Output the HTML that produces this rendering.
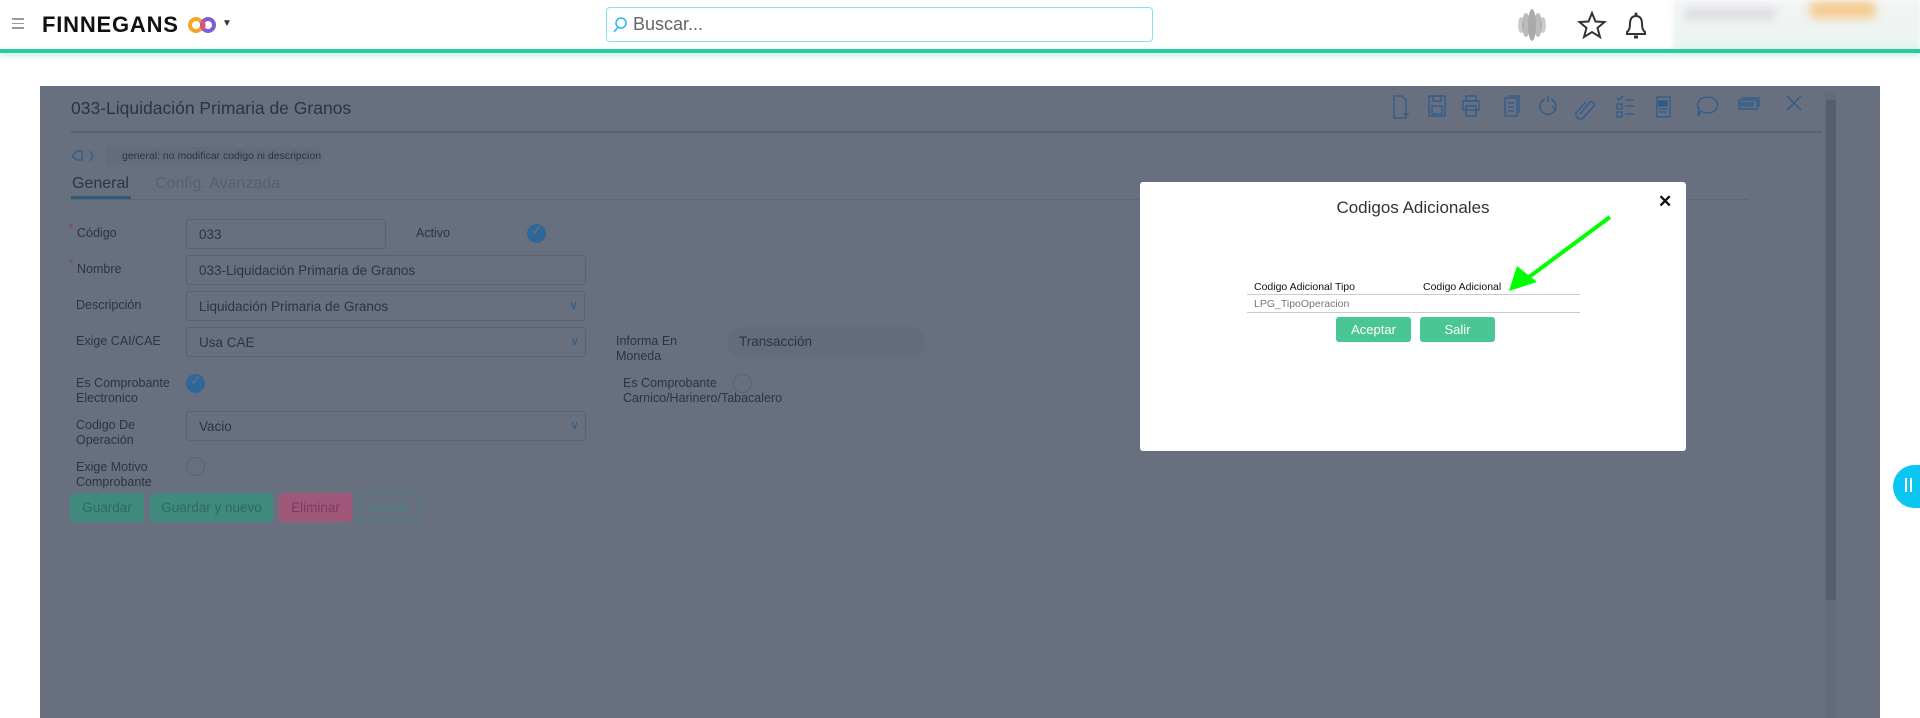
<!DOCTYPE html>
<html><head><meta charset="utf-8"><style>
*{box-sizing:border-box;margin:0;padding:0}
body{width:1920px;height:718px;overflow:hidden;background:#fff;font-family:"Liberation Sans",sans-serif;position:relative}
.abs{position:absolute}
.hdr{left:0;top:0;width:1920px;height:50px;background:#fff}
.gl{left:0;top:49px;width:1920px;height:4px;background:#2fc79c;box-shadow:0 2px 6px rgba(47,199,156,.4)}
.panel{left:40px;top:86px;width:1840px;height:632px;background:#687080}
.txt{color:#2c3440;font-size:13px}
.inp{border:1px solid #5a6372;border-radius:3px;height:30px;background:#687080;color:#2c3440;font-size:13.5px;padding:7px 12px}
.lbl{color:#2c3440;font-size:12.5px;line-height:15px}
.chev{position:absolute;right:6px;top:6px;color:#2d5a8a;font-size:12px}
.btn{height:29px;border-radius:3px;font-size:13.5px;text-align:center;line-height:29px}
.chk{width:19px;height:19px;border-radius:50%}
</style></head><body>
<div class="abs hdr"></div>
<div class="abs" style="left:12px;top:18px;width:12px;">
<div style="height:1.5px;background:#999;margin-bottom:3px"></div><div style="height:1.5px;background:#999;margin-bottom:3px"></div><div style="height:1.5px;background:#999"></div></div>
<div class="abs" style="left:42px;top:12px;font-size:22px;font-weight:bold;color:#111;letter-spacing:0.8px">FINNEGANS</div>
<svg class="abs" style="left:188px;top:16px" width="30" height="18"><circle cx="8" cy="9" r="6" fill="none" stroke="#f5a623" stroke-width="4"/><circle cx="20" cy="9" r="6" fill="none" stroke="#7b5fd6" stroke-width="4"/><path d="M14 5 a6 6 0 0 1 0 8" stroke="#e94e77" stroke-width="4" fill="none"/></svg>
<div class="abs" style="left:222px;top:18px;font-size:10px;color:#333">▼</div>
<div class="abs" style="left:606px;top:7px;width:547px;height:35px;border:1px solid #86e2f3;border-radius:4px"></div>
<svg class="abs" style="left:612px;top:16px" width="16" height="18"><circle cx="9" cy="7" r="5" fill="none" stroke="#29b6f6" stroke-width="1.5"/><path d="M6 11 L2 16" stroke="#29b6f6" stroke-width="1.5"/></svg>
<div class="abs" style="left:633px;top:14px;font-size:18px;color:#666">Buscar...</div>
<svg class="abs" style="left:1515px;top:8px" width="34" height="34"><g fill="#aaa"><ellipse cx="17" cy="17" rx="4" ry="16"/><ellipse cx="11" cy="17" rx="4" ry="12" opacity=".8"/><ellipse cx="23" cy="17" rx="4" ry="12" opacity=".8"/><ellipse cx="6" cy="17" rx="3" ry="8" opacity=".6"/><ellipse cx="28" cy="17" rx="3" ry="8" opacity=".6"/></g></svg>
<svg class="abs" style="left:1577px;top:11px" width="30" height="28"><path d="M15 2 L18.5 10.5 L27.5 11 L20.5 17 L23 26 L15 21 L7 26 L9.5 17 L2.5 11 L11.5 10.5 Z" fill="none" stroke="#333" stroke-width="2"/></svg>
<svg class="abs" style="left:1623px;top:10px" width="26" height="32"><path d="M4 24 L4 22 Q7 20 7 14 Q7 6 13 6 Q19 6 19 14 Q19 20 22 22 L22 24 Z" fill="none" stroke="#333" stroke-width="2"/><circle cx="13" cy="4" r="1.5" fill="#333"/><path d="M11 27 h4" stroke="#333" stroke-width="3"/></svg>
<div class="abs" style="left:1673px;top:0;width:247px;height:52px;background:linear-gradient(180deg,#f4f4f5,#e8f5f0);filter:blur(2px)"></div>
<div class="abs" style="left:1685px;top:8px;width:90px;height:12px;background:#dcdde2;filter:blur(4px)"></div>
<div class="abs" style="left:1810px;top:2px;width:65px;height:16px;background:#f5c98a;filter:blur(5px)"></div>
<div class="abs gl"></div>

<div class="abs panel"></div>
<div class="abs" style="left:1825px;top:92px;width:11px;height:626px;background:#636b7a"></div>
<div class="abs" style="left:1826px;top:100px;width:10px;height:500px;background:#565e6d"></div>
<div class="abs txt" style="left:71px;top:98px;font-size:17.5px">033-Liquidación Primaria de Granos</div>
<div class="abs" style="left:71px;top:131px;width:1751px;height:2px;background:#5a6270"></div>
<svg class="abs" style="left:1390px;top:94px" width="420" height="28" fill="none" stroke="#2d5a8a" stroke-width="1.3">
<path d="M4 2h8l4 4v18h-12z M13 20h6 M16 17v6"/>
<rect x="39" y="2" width="16" height="20"/><rect x="42" y="12" width="10" height="8"/><rect x="43" y="2" width="8" height="5"/>
<rect x="76" y="2" width="10" height="5"/><rect x="73" y="7" width="16" height="9"/><rect x="76" y="12" width="10" height="10"/>
<rect x="115" y="4" width="12" height="18"/><path d="M118 2h11v17 M118 9h6 M118 13h6 M118 17h6"/>
<path d="M155 5 a8 8 0 1 0 6 0 M158 2 v6 M162 12 l3 4"/>
<path d="M190 20 l10 -12 a3 3 0 0 1 4 4 l-12 13 a5 5 0 0 1 -6 -6 l10 -11"/>
<path d="M227 4 l2 2 l4 -4 M227 10h5v5h-5z M227 18h5v5h-5z M235 6h9 M235 12h9 M235 20h9"/>
<rect x="267" y="3" width="13" height="20"/><rect x="269" y="7" width="8" height="5" fill="#2d5a8a"/><path d="M269 15h8 M269 18h8"/>
<path d="M317 3 a10 8 0 1 1 -6 14 l-3 5 l1 -7 a10 8 0 0 1 8 -12"/>
<rect x="349" y="6" width="18" height="9"/><path d="M351 8v5 M353 8v5 M355 8v5 M357 8v5 M359 8v5 M361 8v5 M363 8v5 M351 4h18v9"/>
<path d="M397 2 l14 14 M411 2 l-14 14"/>
</svg>
<svg class="abs" style="left:71px;top:149px" width="24" height="14" fill="none" stroke="#2d5a8a" stroke-width="1.2"><path d="M1 7 l5 -5 h5 v9 h-5 z"/><path d="M19 2 l3 5 l-3 5"/></svg>
<div class="abs" style="left:106px;top:147px;width:215px;height:18px;background:#646c7b"></div>
<div class="abs txt" style="left:122px;top:150px;font-size:10.5px">general: no modificar codigo ni descripcion</div>
<div class="abs txt" style="left:72px;top:175px;font-size:16px">General</div>
<div class="abs" style="left:155px;top:175px;font-size:16px;color:#57606f">Config. Avanzada</div>
<div class="abs" style="left:71px;top:196px;width:60px;height:4px;background:#2f5d78"></div>
<div class="abs" style="left:71px;top:199px;width:1678px;height:1px;background:#5e6674"></div>

<div class="abs" style="left:69px;top:222px;color:#8a3a50;font-size:11px">*</div>
<div class="abs lbl" style="left:77px;top:226px">Código</div>
<div class="abs inp" style="left:186px;top:219px;width:200px">033</div>
<div class="abs lbl" style="left:416px;top:226px">Activo</div>
<div class="abs chk" style="left:527px;top:224px;background:#2f6798"></div>
<div class="abs" style="left:531px;top:222px;color:#687080;font-size:14px">✓</div>

<div class="abs" style="left:69px;top:258px;color:#8a3a50;font-size:11px">*</div>
<div class="abs lbl" style="left:77px;top:262px">Nombre</div>
<div class="abs inp" style="left:186px;top:255px;width:400px">033-Liquidación Primaria de Granos</div>

<div class="abs lbl" style="left:76px;top:298px">Descripción</div>
<div class="abs inp" style="left:186px;top:291px;width:399px">Liquidación Primaria de Granos<span class="chev">∨</span></div>

<div class="abs lbl" style="left:76px;top:334px">Exige CAI/CAE</div>
<div class="abs inp" style="left:186px;top:327px;width:400px">Usa CAE<span class="chev">∨</span></div>
<div class="abs lbl" style="left:616px;top:334px">Informa En<br>Moneda</div>
<div class="abs" style="left:727px;top:327px;width:198px;height:30px;border-radius:15px;background:#646c7b;color:#2c3440;font-size:13.5px;padding:7px 12px">Transacción</div>

<div class="abs lbl" style="left:76px;top:376px">Es Comprobante<br>Electronico</div>
<div class="abs chk" style="left:186px;top:374px;background:#2f6798"></div>
<div class="abs" style="left:190px;top:372px;color:#687080;font-size:14px">✓</div>
<div class="abs lbl" style="left:623px;top:376px">Es Comprobante<br>Carnico/Harinero/Tabacalero</div>
<div class="abs chk" style="left:733px;top:374px;border:1px solid #5a6372"></div>

<div class="abs lbl" style="left:76px;top:418px">Codigo De<br>Operación</div>
<div class="abs inp" style="left:186px;top:411px;width:400px">Vacio<span class="chev">∨</span></div>

<div class="abs lbl" style="left:76px;top:460px">Exige Motivo<br>Comprobante</div>
<div class="abs chk" style="left:186px;top:457px;border:1px solid #5a6372"></div>

<div class="abs btn" style="left:70px;top:493px;width:74px;background:#3f8a7c;color:#2e6a5c">Guardar</div>
<div class="abs btn" style="left:150px;top:493px;width:123px;background:#3f8a7c;color:#2e6a5c">Guardar y nuevo</div>
<div class="abs btn" style="left:279px;top:493px;width:73px;background:#a0587a;color:#7c3d5a">Eliminar</div>
<div class="abs btn" style="left:358px;top:493px;width:62px;border:1px solid #3f8a7c;color:#3f8a7c;line-height:27px">Cerrar</div>

<div class="abs" style="left:1140px;top:182px;width:546px;height:269px;background:#fff;border-radius:3px"></div>
<div class="abs" style="left:1140px;top:198px;width:546px;text-align:center;font-size:17px;color:#333">Codigos Adicionales</div>
<div class="abs" style="left:1658px;top:192px;font-size:17px;font-weight:bold;color:#111">✕</div>
<div class="abs" style="left:1254px;top:281px;font-size:10.5px;color:#111">Codigo Adicional Tipo</div>
<div class="abs" style="left:1423px;top:281px;font-size:10.5px;color:#111">Codigo Adicional</div>
<div class="abs" style="left:1247px;top:294px;width:333px;height:1px;background:#ccc"></div>
<div class="abs" style="left:1254px;top:298px;font-size:10.5px;color:#777">LPG_TipoOperacion</div>
<div class="abs" style="left:1247px;top:312px;width:333px;height:1px;background:#ccc"></div>
<div class="abs btn" style="left:1336px;top:317px;width:75px;height:25px;line-height:25px;background:#4ac594;color:#fff;font-size:13px">Aceptar</div>
<div class="abs btn" style="left:1420px;top:317px;width:75px;height:25px;line-height:25px;background:#4ac594;color:#fff;font-size:13px">Salir</div>
<svg class="abs" style="left:1495px;top:210px" width="130" height="90"><path d="M115 7 L30 70" stroke="#0f0" stroke-width="4"/><path d="M14 81 L22 56 L42 72 Z" fill="#0f0"/></svg>

<div class="abs" style="left:1893px;top:465px;width:50px;height:43px;border-radius:22px;background:#0bc6f3"></div>
<div class="abs" style="left:1905px;top:478px;width:2px;height:14px;background:#fff"></div>
<div class="abs" style="left:1910px;top:478px;width:2px;height:14px;background:#fff"></div>
</body></html>
